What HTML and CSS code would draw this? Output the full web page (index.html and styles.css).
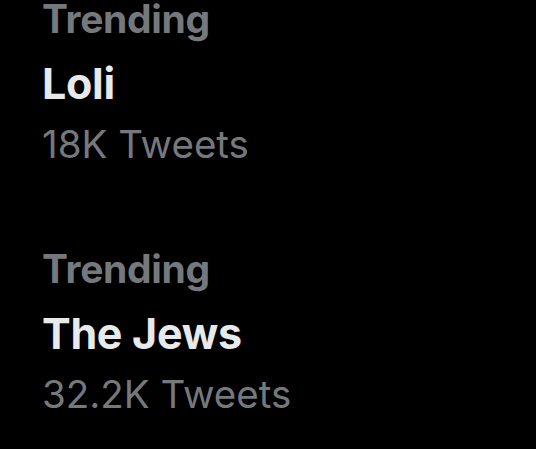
FILE: index.html
```html
<!DOCTYPE html>
<html>
<head>
<meta charset="utf-8">
<link rel="stylesheet" href="styles.css">
</head>
<body>
<div class="list">
  <div class="trend">
    <div class="label">Trending</div>
    <div class="topic">Loli</div>
    <div class="count">18K Tweets</div>
  </div>
  <div class="trend">
    <div class="label">Trending</div>
    <div class="topic">The Jews</div>
    <div class="count">32.2K Tweets</div>
  </div>
</div>
</body>
</html>
```
FILE: styles.css
```css
html, body {
  margin: 0;
  padding: 0;
  background: #000;
  width: 536px;
  height: 449px;
  overflow: hidden;
}
body {
  font-family: Inter, "Liberation Sans", sans-serif;
}
.list {
  display: flex;
  flex-direction: column;
  gap: 85px;
  padding-left: 42px;
}
.trend {
  display: flex;
  flex-direction: column;
}
.label {
  color: #75797e;
  font-size: 39px;
  font-weight: 700;
  line-height: 38px;
  letter-spacing: -0.3px;
  white-space: nowrap;
}
.topic {
  color: #e7e9ea;
  font-size: 43px;
  font-weight: 700;
  line-height: 80px;
  margin-top: 5px;
  letter-spacing: -0.3px;
  white-space: nowrap;
}
.count {
  color: #75797e;
  font-size: 38.5px;
  font-weight: 400;
  line-height: 42px;
  white-space: nowrap;
}
```
